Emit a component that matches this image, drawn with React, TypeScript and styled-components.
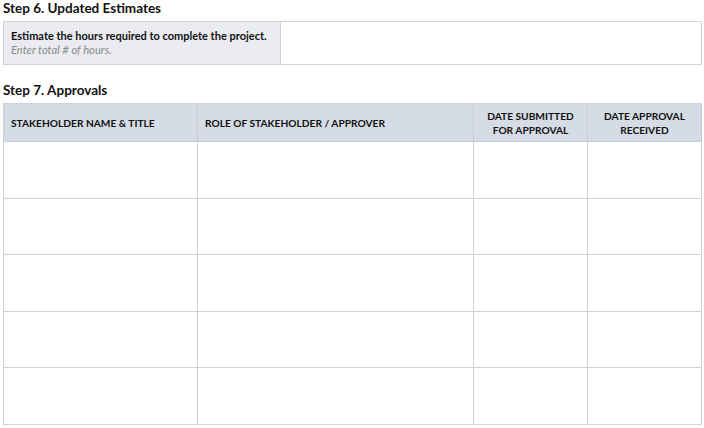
import React from "react";
import styled, { createGlobalStyle } from "styled-components";

const Global = createGlobalStyle`
  html, body { margin: 0; padding: 0; background: #ffffff; }
  body { font-family: Lato, "Open Sans", sans-serif; color: #111; }
`;

const Page = styled.div`
  width: 699px;
  padding: 0 0 0 3px;
  display: flex;
  flex-direction: column;
`;

const Heading = styled.h2<{ $top: number }>`
  margin: ${(p) => p.$top}px 0 0 0;
  font-size: 13.5px;
  font-weight: 700;
  line-height: 16px;
  color: #111;
`;

const EstimateBox = styled.div`
  margin-top: 5px;
  display: grid;
  grid-template-columns: 277px 1fr;
  height: 44px;
  border: 1px solid #d2d2d2;
  box-sizing: border-box;
`;

const EstimateLabel = styled.div`
  background: #eaecf1;
  border-right: 1px solid #d2d2d2;
  padding: 7px 7px 0 7px;
  display: flex;
  flex-direction: column;
`;

const LabelMain = styled.span`
  font-size: 11px;
  font-weight: 700;
  line-height: 14px;
`;

const LabelHint = styled.span`
  font-size: 11.2px;
  font-style: italic;
  color: #8a8a8a;
  line-height: 14px;
`;

const Table = styled.div`
  margin-top: 5px;
  display: grid;
  grid-template-columns: 194px 276px 114px 1fr;
  grid-template-rows: 38px repeat(5, 56.6px);
  border-top: 1px solid #cfd3d9;
  border-left: 1px solid #d2d2d2;
`;

const HeadCell = styled.div<{ $center?: boolean }>`
  background: #d6dce5;
  border-right: 1px solid #c9ced6;
  border-bottom: 1px solid #c9ced6;
  font-size: 10.2px;
  font-weight: 700;
  line-height: 14px;
  display: flex;
  align-items: center;
  justify-content: ${(p) => (p.$center ? "center" : "flex-start")};
  text-align: ${(p) => (p.$center ? "center" : "left")};
  padding: 0 7px;
`;

const Cell = styled.div`
  border-right: 1px solid #d2d2d2;
  border-bottom: 1px solid #d2d2d2;
`;

export default function App() {
  const rows = [0, 1, 2, 3, 4];
  return (
    <>
      <Global />
      <Page>
        <Heading $top={0}>Step 6. Updated Estimates</Heading>
        <EstimateBox>
          <EstimateLabel>
            <LabelMain>Estimate the hours required to complete the project.</LabelMain>
            <LabelHint>Enter total # of hours.</LabelHint>
          </EstimateLabel>
          <div />
        </EstimateBox>
        <Heading $top={17}>Step 7. Approvals</Heading>
        <Table>
          <HeadCell>STAKEHOLDER NAME &amp; TITLE</HeadCell>
          <HeadCell>ROLE OF STAKEHOLDER / APPROVER</HeadCell>
          <HeadCell $center>
            DATE SUBMITTED
            <br />
            FOR APPROVAL
          </HeadCell>
          <HeadCell $center>
            DATE APPROVAL
            <br />
            RECEIVED
          </HeadCell>
          {rows.map((r) => (
            <React.Fragment key={r}>
              <Cell />
              <Cell />
              <Cell />
              <Cell />
            </React.Fragment>
          ))}
        </Table>
      </Page>
    </>
  );
}
